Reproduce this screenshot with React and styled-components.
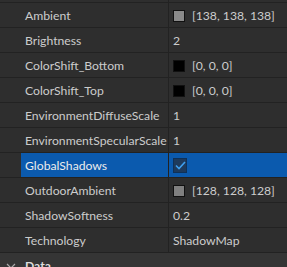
import React from "react";
import styled, { createGlobalStyle } from "styled-components";

const GlobalStyle = createGlobalStyle`
  html, body {
    margin: 0;
    padding: 0;
    background: #2e2e2e;
    overflow: hidden;
  }
  body {
    font-family: Lato, "Noto Sans", sans-serif;
  }
`;

const Panel = styled.div`
  width: 287px;
  height: 267px;
  overflow: hidden;
  background: #2e2e2e;
`;

const List = styled.div`
  margin-top: -23px;
`;

const Row = styled.div`
  display: grid;
  grid-template-columns: 21px 147px 1fr;
  height: 24px;
  border-top: 1px solid #222222;
`;

const Gutter = styled.div`
  background: #2e2e2e;
`;

const NameCell = styled.div`
  display: flex;
  align-items: center;
  padding-left: 4px;
  padding-top: 1px;
  overflow: hidden;
  white-space: nowrap;
  font-size: 12.2px;
  color: ${({ selected }) => (selected ? "#ececec" : "#cccccc")};
  background: ${({ selected }) => (selected ? "#0b5aae" : "transparent")};
`;

const ValueCell = styled.div`
  display: flex;
  align-items: center;
  gap: 7px;
  padding-left: 4px;
  padding-top: 1px;
  border-left: 1px solid #222222;
  white-space: nowrap;
  overflow: hidden;
  font-size: 12.2px;
  color: ${({ selected }) => (selected ? "#ececec" : "#cccccc")};
  background: ${({ selected }) => (selected ? "#0b5aae" : "transparent")};
`;

const Swatch = styled.span`
  width: 10px;
  height: 10px;
  border: 1px solid #111111;
  background: ${({ color }) => color};
  flex: none;
`;

const Checkbox = styled.span`
  width: 12px;
  height: 13px;
  margin-top: -1px;
  border: 1px solid #0f3158;
  background: #1e3a5c;
  display: flex;
  align-items: center;
  justify-content: center;
  flex: none;
`;

const SectionRow = styled.div`
  display: flex;
  align-items: center;
  height: 24px;
  border-top: 1px solid #222222;
  background: #353535;
`;

const Chevron = styled.span`
  width: 21px;
  display: flex;
  justify-content: center;
  padding-top: 2px;
`;

const SectionTitle = styled.span`
  padding-left: 4px;
  font-size: 12.2px;
  font-weight: 700;
  color: #dddddd;
`;

const props = [
  { name: "Ambient", color: "#8a8a8a", value: "[138, 138, 138]" },
  { name: "Brightness", value: "2" },
  { name: "ColorShift_Bottom", color: "#000000", value: "[0, 0, 0]" },
  { name: "ColorShift_Top", color: "#000000", value: "[0, 0, 0]" },
  { name: "EnvironmentDiffuseScale", value: "1" },
  { name: "EnvironmentSpecularScale", value: "1" },
  { name: "GlobalShadows", check: true, selected: true },
  { name: "OutdoorAmbient", color: "#808080", value: "[128, 128, 128]" },
  { name: "ShadowSoftness", value: "0.2" },
  { name: "Technology", value: "ShadowMap" },
];

const App = () => (
  <Panel>
    <GlobalStyle />
    <List>
      <Row>
        <Gutter />
        <NameCell />
        <ValueCell />
      </Row>
      {props.map((p) => (
        <Row key={p.name}>
          <Gutter />
          <NameCell selected={p.selected}>{p.name}</NameCell>
          <ValueCell selected={p.selected}>
            {p.color && <Swatch color={p.color} />}
            {p.check && (
              <Checkbox>
                <svg width="11" height="9" viewBox="0 0 11 9">
                  <path
                    d="M1 4.5 L4 7.5 L10 1"
                    fill="none"
                    stroke="#3f9fef"
                    strokeWidth="1.6"
                  />
                </svg>
              </Checkbox>
            )}
            {p.value && <span>{p.value}</span>}
          </ValueCell>
        </Row>
      ))}
      <SectionRow>
        <Chevron>
          <svg width="10" height="6" viewBox="0 0 10 6">
            <path d="M1 1 L5 5 L9 1" fill="none" stroke="#aaaaaa" strokeWidth="1.2" />
          </svg>
        </Chevron>
        <SectionTitle>Data</SectionTitle>
      </SectionRow>
    </List>
  </Panel>
);

export default App;
